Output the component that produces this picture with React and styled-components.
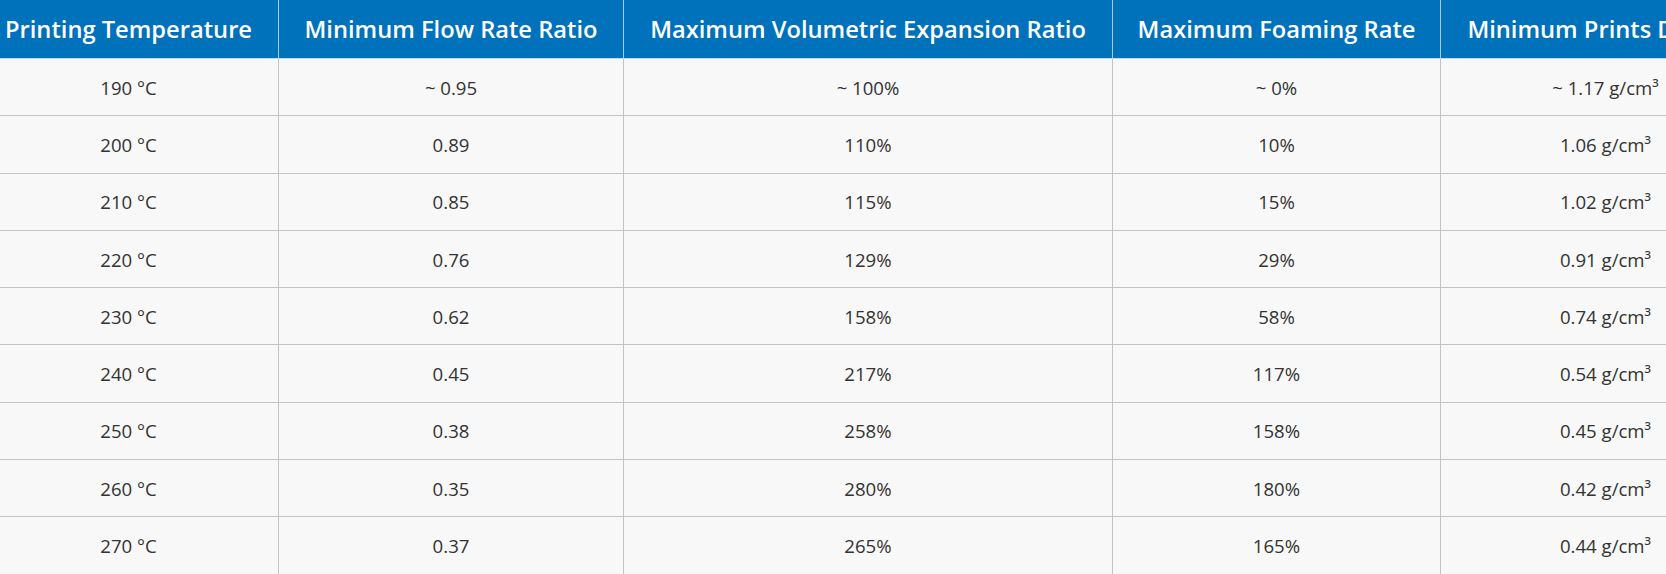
import React, { useEffect, useRef } from 'react';
import styled, { createGlobalStyle } from 'styled-components';

const GlobalStyle = createGlobalStyle`
  html, body {
    margin: 0;
    padding: 0;
    background: #ffffff;
  }
  body {
    font-family: "Open Sans", "Noto Sans", Arial, sans-serif;
  }
`;

// --- STYLED COMPONENTS ---

const Scroller = styled.div`
  width: 1666px;
  height: 574px;
  overflow: hidden;
  background: #f8f8f8;
`;

const Table = styled.table`
  table-layout: fixed;
  border-collapse: collapse;
  width: 1792px;
  background: #f8f8f8;
`;

const HeadCell = styled.th`
  height: 58px;
  padding: 0 20px;
  background: #0071bb;
  color: #ffffff;
  font-size: 23.7px;
  font-weight: 600;
  text-align: center;
  white-space: nowrap;
  border-left: 1px solid #a9cbe8;
  border-right: 1px solid #a9cbe8;
  border-bottom: 1px solid #c9d6e3;
`;

const Row = styled.tr`
  height: 57.3px;
  border-top: 1px solid #c3c3c3;
`;

const Cell = styled.td`
  padding: 0 20px;
  color: #333333;
  font-size: 18.6px;
  text-align: center;
  white-space: nowrap;
  border-left: 1px solid #c3c3c3;
  border-right: 1px solid #c3c3c3;
`;

// --- DATA ---

const columns = [
  { title: 'Printing Temperature', width: 300 },
  { title: 'Minimum Flow Rate Ratio', width: 345 },
  { title: 'Maximum Volumetric Expansion Ratio', width: 489 },
  { title: 'Maximum Foaming Rate', width: 328 },
  { title: 'Minimum Prints Density', width: 330 },
];

const rows = [
  ['190 °C', '~ 0.95', '~ 100%', '~ 0%', '~ 1.17 g/cm³'],
  ['200 °C', '0.89', '110%', '10%', '1.06 g/cm³'],
  ['210 °C', '0.85', '115%', '15%', '1.02 g/cm³'],
  ['220 °C', '0.76', '129%', '29%', '0.91 g/cm³'],
  ['230 °C', '0.62', '158%', '58%', '0.74 g/cm³'],
  ['240 °C', '0.45', '217%', '117%', '0.54 g/cm³'],
  ['250 °C', '0.38', '258%', '158%', '0.45 g/cm³'],
  ['260 °C', '0.35', '280%', '180%', '0.42 g/cm³'],
  ['270 °C', '0.37', '265%', '165%', '0.44 g/cm³'],
];

// --- COMPONENTS ---

const App = () => {
  const scrollRef = useRef(null);

  // the table sits slightly scrolled to the right in the screenshot
  useEffect(() => {
    if (scrollRef.current) scrollRef.current.scrollLeft = 22;
  }, []);

  return (
    <>
      <GlobalStyle />
      <Scroller ref={scrollRef}>
        <Table>
          <colgroup>
            {columns.map((col) => (
              <col key={col.title} style={{ width: col.width }} />
            ))}
          </colgroup>
          <thead>
            <tr>
              {columns.map((col) => (
                <HeadCell key={col.title}>{col.title}</HeadCell>
              ))}
            </tr>
          </thead>
          <tbody>
            {rows.map((row) => (
              <Row key={row[0]}>
                {row.map((value, i) => (
                  <Cell key={i}>{value}</Cell>
                ))}
              </Row>
            ))}
          </tbody>
        </Table>
      </Scroller>
    </>
  );
};

export default App;
